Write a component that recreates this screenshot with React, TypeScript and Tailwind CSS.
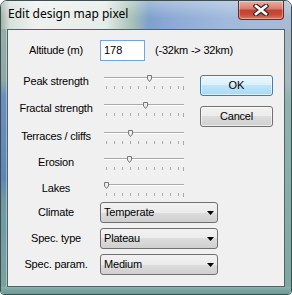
import React from "react";

const ui = '"Liberation Sans", Arial, sans-serif';

function Slider({ pos }: { pos: number }) {
  const ticks = [0, 1, 2, 3, 4, 5, 6, 7, 8, 9];
  return (
    <div className="relative h-[26px] w-[92px]">
      <div className="ml-[4px] mt-[9px] h-[2px] w-[80px] border-t border-b border-t-[#a9a9a9] border-b-white" />
      <div className="ml-[6px] mt-[7px] flex items-start">
        {ticks.map((i) => (
          <div key={i} className="mr-[7px] h-[3px] w-px bg-[#a8a8a8]" />
        ))}
        <div className="ml-[-3px] h-[4px] w-px bg-[#a8a8a8]" />
      </div>
      <svg
        className="absolute top-[7px]"
        style={{ left: pos - 2 }}
        width="5"
        height="7"
        viewBox="0 0 5 7"
      >
        <path d="M0.5 0.5 H4.5 V4 L2.5 6.5 L0.5 4 Z" fill="#ededed" stroke="#787878" strokeWidth="1" />
      </svg>
    </div>
  );
}

function Label({ children }: { children: React.ReactNode }) {
  return (
    <div className="ml-[4px] w-[88px] text-center text-[11px] tracking-[-0.2px] text-black" style={{ fontFamily: ui }}>
      {children}
    </div>
  );
}

function Combo({ value }: { value: string }) {
  return (
    <div className="flex h-[21px] w-[118px] items-center justify-between rounded-[3px] border border-[#707070] bg-[linear-gradient(to_bottom,#f2f2f2_0%,#ebebeb_50%,#dddddd_50%,#cfcfcf_100%)] pl-[3px] pr-[3px]">
      <span className="text-[11px] tracking-[-0.2px] text-black" style={{ fontFamily: ui }}>
        {value}
      </span>
      <svg width="7" height="4" viewBox="0 0 7 4">
        <path d="M0 0 H7 L3.5 4 Z" fill="#000" />
      </svg>
    </div>
  );
}

function SliderRow({ label, pos, h }: { label: string; pos: number; h: string }) {
  return (
    <div className={`flex items-start ${h}`}>
      <div className="flex h-[26px] items-center">
        <Label>{label}</Label>
      </div>
      <Slider pos={pos} />
    </div>
  );
}

function ComboRow({ label, value }: { label: string; value: string }) {
  return (
    <div className="flex h-[26px] items-start">
      <div className="flex h-[21px] items-center">
        <Label>{label}</Label>
      </div>
      <Combo value={value} />
    </div>
  );
}

export default function App() {
  return (
    <div className="h-[295px] w-[292px] bg-white">
      <div className="flex h-[295px] w-[292px] flex-col overflow-hidden rounded-t-[7px] rounded-b-[4px] border border-[#3e4f52]">
        {/* Title bar */}
        <div className="relative flex h-[28px] shrink-0 items-start justify-between bg-[linear-gradient(90deg,#9fb3a9_0%,#d6e1dc_3%,#eef2ef_12%,#e6ece9_36%,#a9c2b7_45%,#7fa1cd_51%,#8eabd6_60%,#a1badc_78%,#a8bbd5_100%)]">
          <div className="absolute inset-0 bg-[linear-gradient(to_bottom,rgba(255,255,255,0.3)_0%,rgba(255,255,255,0)_60%)]" />
          <div
            className="relative pl-[7px] pt-[5px] text-[12px] leading-[16px] text-black"
            style={{ fontFamily: '"Noto Sans", "Open Sans", sans-serif' }}
          >
            Edit design map pixel
          </div>
          <div className="relative mr-[7px] flex h-[19px] w-[46px] items-center justify-center rounded-b-[4px] border border-t-0 border-[#6b2a22] bg-[linear-gradient(to_bottom,#e9b0a3_0%,#d9796a_45%,#c3402f_50%,#c84a38_75%,#dc7a62_100%)] shadow-[inset_0_0_0_1px_rgba(255,255,255,0.35)]">
            <svg width="16" height="12" viewBox="0 0 16 12">
              <path
                d="M3 2 L13 10 M13 2 L3 10"
                stroke="#3a2a2a"
                strokeWidth="5"
                strokeLinecap="square"
              />
              <path
                d="M3 2 L13 10 M13 2 L3 10"
                stroke="#ffffff"
                strokeWidth="2.6"
                strokeLinecap="square"
              />
            </svg>
          </div>
        </div>

        {/* Middle */}
        <div className="flex flex-1">
          <div className="w-[6px] bg-[linear-gradient(to_bottom,#97aea8_0%,#8ea8a6_20%,#6a8fbf_26%,#5f85b8_58%,#6f98a6_66%,#78a39c_100%)]" />
          <div className="flex-1 border border-[#4f6466] bg-[#f0f0f0] shadow-[0_0_0_1px_rgba(255,255,255,0.35)]">
            <div className="flex flex-col pt-[10px]">
              {/* Altitude */}
              <div className="flex h-[21px] items-center">
                <Label>Altitude (m)</Label>
                <div className="flex h-[21px] w-[45px] items-center border border-[#6fa6dc] bg-white pl-[3px]">
                  <span className="text-[11px] text-black" style={{ fontFamily: ui }}>
                    178
                  </span>
                </div>
                <div className="ml-[10px] text-[11px] tracking-[-0.2px] text-black" style={{ fontFamily: ui }}>
                  (-32km -&gt; 32km)
                </div>
              </div>

              {/* Sliders + buttons */}
              <div className="mt-[7px] flex">
                <div className="flex w-[184px] flex-col">
                  <SliderRow label="Peak strength" pos={49} h="h-[27px]" />
                  <SliderRow label="Fractal strength" pos={45} h="h-[28px]" />
                  <SliderRow label="Terraces / cliffs" pos={30} h="h-[26px]" />
                  <SliderRow label="Erosion" pos={29} h="h-[26px]" />
                  <SliderRow label="Lakes" pos={6} h="h-[26px]" />
                </div>
                <div className="ml-[8px] flex flex-col pt-[7px]">
                  <div className="flex h-[21px] w-[73px] items-center justify-center rounded-[3px] border border-[#3c7fb1] bg-[linear-gradient(to_bottom,#eaf6fd_0%,#d9f0fc_50%,#bee6fd_50%,#a7d9f5_100%)] shadow-[inset_0_0_0_1px_rgba(255,255,255,0.6)]">
                    <span className="text-[11px] text-black" style={{ fontFamily: ui }}>
                      OK
                    </span>
                  </div>
                  <div className="mt-[10px] flex h-[21px] w-[73px] items-center justify-center rounded-[3px] border border-[#707070] bg-[linear-gradient(to_bottom,#f2f2f2_0%,#ebebeb_50%,#dddddd_50%,#cfcfcf_100%)] shadow-[inset_0_0_0_1px_rgba(255,255,255,0.6)]">
                    <span className="text-[11px] tracking-[-0.2px] text-black" style={{ fontFamily: ui }}>
                      Cancel
                    </span>
                  </div>
                </div>
              </div>

              {/* Combos */}
              <div className="mt-[1px] flex flex-col">
                <ComboRow label="Climate" value="Temperate" />
                <ComboRow label="Spec. type" value="Plateau" />
                <ComboRow label="Spec. param." value="Medium" />
              </div>
            </div>
          </div>
          <div className="w-[6px] bg-[linear-gradient(to_bottom,#a9b7c6_0%,#a7b8c2_20%,#8fb4ad_27%,#7ca8a0_100%)]" />
        </div>
        <div className="h-[7px] shrink-0 bg-[linear-gradient(to_bottom,#8db4ae_0%,#79a59f_40%,#6e9b95_100%)]" />
      </div>
    </div>
  );
}
